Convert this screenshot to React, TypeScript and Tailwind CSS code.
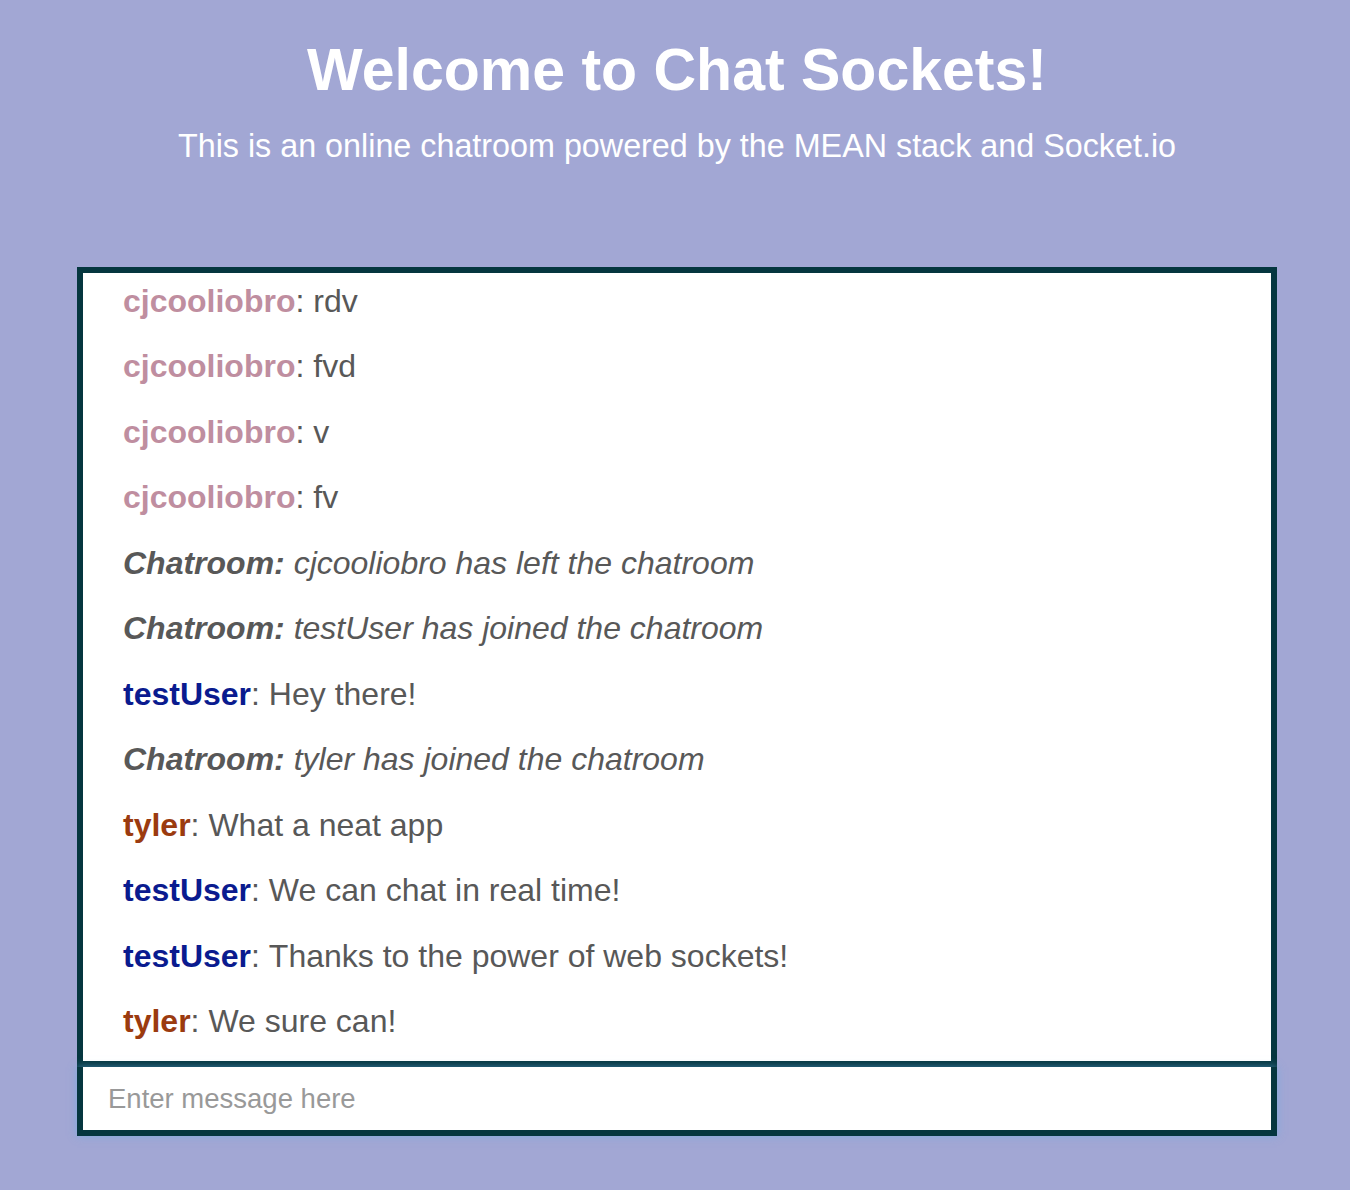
import React from "react";

type Msg = { user: string; text: string; kind: "cj" | "sys" | "test" | "tyler" };

const messages: Msg[] = [
  { user: "cjcooliobro", text: "rdv", kind: "cj" },
  { user: "cjcooliobro", text: "fvd", kind: "cj" },
  { user: "cjcooliobro", text: "v", kind: "cj" },
  { user: "cjcooliobro", text: "fv", kind: "cj" },
  { user: "Chatroom", text: "cjcooliobro has left the chatroom", kind: "sys" },
  { user: "Chatroom", text: "testUser has joined the chatroom", kind: "sys" },
  { user: "testUser", text: "Hey there!", kind: "test" },
  { user: "Chatroom", text: "tyler has joined the chatroom", kind: "sys" },
  { user: "tyler", text: "What a neat app", kind: "tyler" },
  { user: "testUser", text: "We can chat in real time!", kind: "test" },
  { user: "testUser", text: "Thanks to the power of web sockets!", kind: "test" },
  { user: "tyler", text: "We sure can!", kind: "tyler" },
];

function Row({ m }: { m: Msg }) {
  if (m.kind === "sys") {
    return (
      <div className="h-[65.5px] pb-[10px] flex items-center pl-[40px] italic text-[#585858]">
        <span className="font-bold">{m.user}:</span>
        <span>&nbsp;{m.text}</span>
      </div>
    );
  }
  const color =
    m.kind === "cj" ? "text-[#bf8ea0]" : m.kind === "test" ? "text-[#0a1b8f]" : "text-[#9b3b0f]";
  return (
    <div className="h-[65.5px] pb-[10px] flex items-center pl-[40px] text-[#585858]">
      <span className={`font-bold ${color}`}>{m.user}</span>
      <span>:&nbsp;{m.text}</span>
    </div>
  );
}

export default function App() {
  return (
    <div
      className="min-h-[1190px] w-full bg-[#a2a7d4] flex flex-col items-center pl-[4px]"
      style={{ fontFamily: '"Liberation Sans", Arial, Helvetica, sans-serif' }}
    >
      <h1 className="mt-[33px] text-[59px] leading-[74px] font-bold text-white">
        Welcome to Chat Sockets!
      </h1>
      <p className="mt-[21px] text-[32.3px] leading-[36px] text-white">
        This is an online chatroom powered by the MEAN stack and Socket.io
      </p>
      <div className="mt-[103px] w-[1200px] flex flex-col">
        <div className="bg-white border-[6px] border-[#05363f] text-[32px] leading-[38px] pb-[2px]">
          {messages.map((m, i) => (
            <Row key={i} m={m} />
          ))}
        </div>
        <div className="relative z-10 bg-white border-[6px] border-t-0 border-[#05363f] h-[69px] shadow-[0_0_8px_rgba(102,175,233,0.6)] flex items-center">
          <input
            className="w-full h-full pl-[25px] text-[27.5px] text-[#555] placeholder:text-[#999999] outline-none bg-transparent"
            placeholder="Enter message here"
            style={{ fontFamily: '"Liberation Sans", Arial, sans-serif' }}
          />
        </div>
      </div>
    </div>
  );
}
